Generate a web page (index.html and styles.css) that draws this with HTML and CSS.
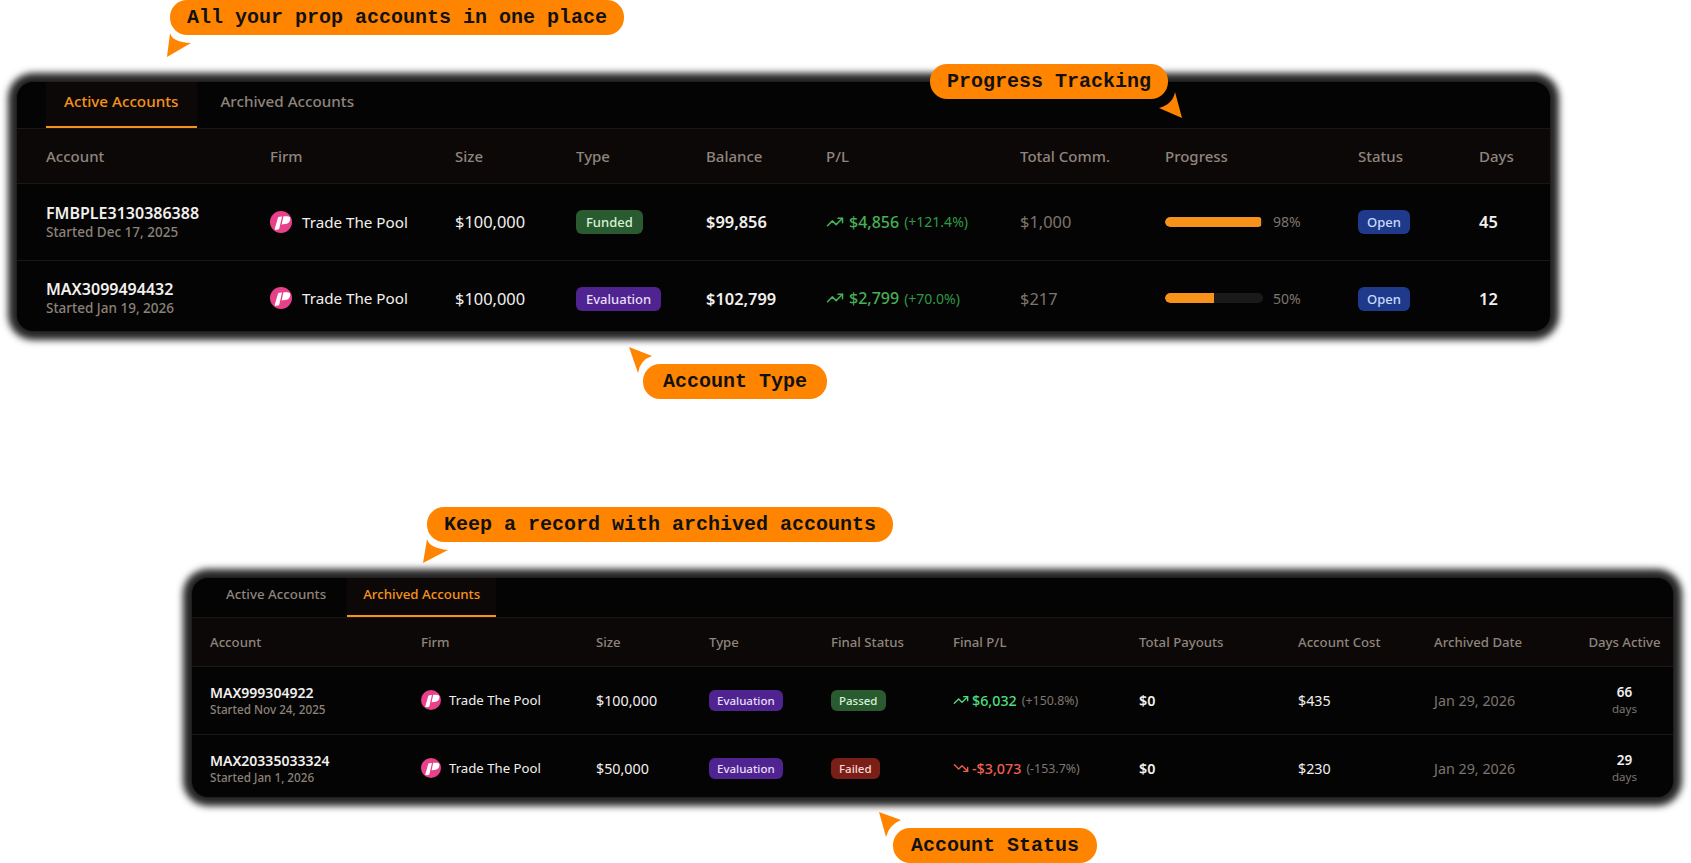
FILE: index.html
```html
<!DOCTYPE html>
<html lang="en">
<head>
  <meta charset="UTF-8" />
  <title>Prop Accounts</title>
  <link rel="stylesheet" href="styles.css">
</head>
<body>
<svg class="defs" width="0" height="0">
  <symbol id="firm-logo" viewBox="0 0 64 64">
    <circle cx="32" cy="32" r="32" fill="#e8408a"/>
    <path d="M14 51 L23 20 Q24 17 27 17 L35 16 L27 51 Q26 54 23 54 L16 55 Q13 55 14 51Z" fill="#fff"/>
    <path d="M39 15 L50 15 Q60 15 59 24 Q57 38 43 38 L34 39Z" fill="#fff"/>
  </symbol>
  <symbol id="trend-up" viewBox="0 0 24 24">
    <polyline points="22 7 13.5 15.5 8.5 10.5 2 17"/>
    <polyline points="16 7 22 7 22 13"/>
  </symbol>
  <symbol id="trend-down" viewBox="0 0 24 24">
    <polyline points="22 17 13.5 8.5 8.5 13.5 2 7"/>
    <polyline points="16 17 22 17 22 11"/>
  </symbol>
</svg>

<div class="card card-active">
  <div class="tabs">
    <a class="tab current" href="#">Active Accounts</a>
    <a class="tab" href="#">Archived Accounts</a>
  </div>
  <table>
    <colgroup>
      <col style="width:224px"><col style="width:185px"><col style="width:121px"><col style="width:130px"><col style="width:120px">
      <col style="width:194px"><col style="width:145px"><col style="width:193px"><col style="width:121px"><col style="width:100px">
    </colgroup>
    <thead>
      <tr><th>Account</th><th>Firm</th><th>Size</th><th>Type</th><th>Balance</th><th>P/L</th><th>Total Comm.</th><th>Progress</th><th>Status</th><th>Days</th></tr>
    </thead>
    <tbody>
      <tr>
        <td><div class="acct">FMBPLE3130386388</div><div class="started">Started Dec 17, 2025</div></td>
        <td><div class="firm"><svg class="logo"><use href="#firm-logo"/></svg>Trade The Pool</div></td>
        <td>$100,000</td>
        <td><span class="badge funded">Funded</span></td>
        <td class="strong">$99,856</td>
        <td><div class="pl gain"><svg class="trend"><use href="#trend-up"/></svg><span class="amount">$4,856</span><span class="pct">(+121.4%)</span></div></td>
        <td class="muted">$1,000</td>
        <td><div class="progress"><div class="track"><div class="fill" style="width:98%"></div></div><span class="pct-label">98%</span></div></td>
        <td><span class="badge open">Open</span></td>
        <td class="strong">45</td>
      </tr>
      <tr class="last">
        <td><div class="acct">MAX3099494432</div><div class="started">Started Jan 19, 2026</div></td>
        <td><div class="firm"><svg class="logo"><use href="#firm-logo"/></svg>Trade The Pool</div></td>
        <td>$100,000</td>
        <td><span class="badge evaluation">Evaluation</span></td>
        <td class="strong">$102,799</td>
        <td><div class="pl gain"><svg class="trend"><use href="#trend-up"/></svg><span class="amount">$2,799</span><span class="pct">(+70.0%)</span></div></td>
        <td class="muted">$217</td>
        <td><div class="progress"><div class="track"><div class="fill" style="width:50%"></div></div><span class="pct-label">50%</span></div></td>
        <td><span class="badge open">Open</span></td>
        <td class="strong">12</td>
      </tr>
    </tbody>
  </table>
</div>

<div class="card card-archived">
  <div class="tabs">
    <a class="tab" href="#">Active Accounts</a>
    <a class="tab current" href="#">Archived Accounts</a>
  </div>
  <table>
    <colgroup>
      <col style="width:211px"><col style="width:175px"><col style="width:113px"><col style="width:122px"><col style="width:122px">
      <col style="width:186px"><col style="width:159px"><col style="width:136px"><col style="width:154px"><col style="width:103px">
    </colgroup>
    <thead>
      <tr><th>Account</th><th>Firm</th><th>Size</th><th>Type</th><th>Final Status</th><th>Final P/L</th><th>Total Payouts</th><th>Account Cost</th><th>Archived Date</th><th class="days-col">Days Active</th></tr>
    </thead>
    <tbody>
      <tr>
        <td><div class="acct">MAX999304922</div><div class="started">Started Nov 24, 2025</div></td>
        <td><div class="firm"><svg class="logo"><use href="#firm-logo"/></svg>Trade The Pool</div></td>
        <td>$100,000</td>
        <td><span class="badge evaluation">Evaluation</span></td>
        <td><span class="badge funded">Passed</span></td>
        <td><div class="pl gain"><svg class="trend"><use href="#trend-up"/></svg><span class="amount">$6,032</span><span class="pct">(+150.8%)</span></div></td>
        <td class="strong">$0</td>
        <td>$435</td>
        <td class="muted">Jan 29, 2026</td>
        <td class="days-col"><div class="days-num">66</div><div class="days-unit">days</div></td>
      </tr>
      <tr class="last">
        <td><div class="acct">MAX20335033324</div><div class="started">Started Jan 1, 2026</div></td>
        <td><div class="firm"><svg class="logo"><use href="#firm-logo"/></svg>Trade The Pool</div></td>
        <td>$50,000</td>
        <td><span class="badge evaluation">Evaluation</span></td>
        <td><span class="badge failed">Failed</span></td>
        <td><div class="pl loss"><svg class="trend"><use href="#trend-down"/></svg><span class="amount">-$3,073</span><span class="pct">(-153.7%)</span></div></td>
        <td class="strong">$0</td>
        <td>$230</td>
        <td class="muted">Jan 29, 2026</td>
        <td class="days-col"><div class="days-num">29</div><div class="days-unit">days</div></td>
      </tr>
    </tbody>
  </table>
</div>

<div class="callout c-all">All your prop accounts in one place</div>
<div class="callout c-progress">Progress Tracking</div>
<div class="callout c-type">Account Type</div>
<div class="callout c-record">Keep a record with archived accounts</div>
<div class="callout c-status">Account Status</div>

<svg class="pointers" width="1691" height="863">
  <path d="M170 33 Q172 42 191 43 L167 57Z"/>
  <path d="M1175 92 Q1173 104 1159 108 L1182 118Z"/>
  <path d="M629 347 L652 356 Q640 360 638 373Z"/>
  <path d="M427 539 Q429 548 448 550 L423 563Z"/>
  <path d="M879 812 L901 820 Q889 825 886 837Z"/>
</svg>
</body>
</html>
```

FILE: styles.css
```css
* {
  box-sizing: border-box;
}
body {
  margin: 0;
  height: 100vh;
  overflow: hidden;
  position: relative;
  background: #fff;
  font-family: 'Noto Sans', sans-serif;
  color: #fff;
}
.defs {
  position: absolute;
}
.card {
  background: #050404;
  border-radius: 16px;
  overflow: hidden;
  box-shadow: 0 0 0 1px #1f1f1f, 0 0 7px 9px #262626;
}
.card-active {
  width: 1533px;
  margin: 82px 0 0 17px;
}
.card-archived {
  width: 1481px;
  margin: 247px 0 0 192px;
}

/* tabs */
.tabs {
  display: flex;
  border-bottom: 1px solid #1a1716;
}
.tab {
  color: #8f857c;
  text-decoration: none;
  font-weight: 500;
  display: flex;
  align-items: center;
  border-bottom: 2px solid transparent;
}
.tab.current {
  color: #f7931a;
  background: #0c0808;
  border-bottom-color: #f7931a;
}
.card-active .tabs {
  height: 47px;
  padding-left: 29px;
  gap: 5px;
}
.card-active .tab {
  padding: 0 19px 7px 18px;
  font-size: 15.2px;
}
.card-archived .tabs {
  height: 40px;
  padding-left: 18px;
  gap: 5px;
}
.card-archived .tab {
  padding: 0 16px 5px;
  font-size: 13.3px;
}

/* table */
table {
  width: 100%;
  table-layout: fixed;
  border-collapse: collapse;
}
th {
  text-align: left;
  font-weight: 500;
  color: #8f857c;
  background: #0c0808;
  border-bottom: 1px solid #1a1716;
}
td {
  vertical-align: middle;
  border-bottom: 1px solid #1a1716;
  color: #f2f0ee;
}
tr.last td {
  border-bottom: none;
}
.card-active th,
.card-active td {
  padding-left: 29px;
}
.card-active th {
  height: 54px;
  font-size: 15px;
}
.card-active td {
  height: 77px;
  font-size: 16.4px;
}
.card-active tr.last td {
  height: 71px;
  padding-top: 6px;
}
.card-archived th,
.card-archived td {
  padding-left: 18px;
}
.card-archived th {
  height: 48px;
  font-size: 13.2px;
}
.card-archived td {
  height: 68px;
  font-size: 14.3px;
  padding-top: 1px;
}
.card-archived tr.last td {
  height: 63px;
  padding-top: 6px;
}
.strong {
  font-weight: 600;
}
td.muted {
  color: #7d756e;
}

.acct {
  font-weight: 600;
}
.started {
  color: #8b8279;
  font-weight: 500;
}
.card-active .acct {
  font-size: 16px;
  line-height: 20px;
}
.card-active .started {
  font-size: 13.5px;
  line-height: 18px;
}
.card-archived .acct {
  font-size: 14px;
  line-height: 18px;
}
.card-archived .started {
  font-size: 11.7px;
  line-height: 15px;
}

.firm {
  display: flex;
  align-items: center;
}
.logo {
  flex: none;
}
.card-active .firm {
  font-size: 15.2px;
}
.card-archived .firm {
  font-size: 13.2px;
}
.card-active .logo {
  width: 22px;
  height: 22px;
  margin-right: 10px;
}
.card-archived .logo {
  width: 20px;
  height: 20px;
  margin-right: 8px;
}

.badge {
  display: inline-block;
  font-weight: 500;
}
.card-active .badge {
  font-size: 13px;
  line-height: 24px;
  padding: 0 10px;
  border-radius: 6px;
}
.card-active .open {
  padding: 0 9px;
}
.card-archived .badge {
  font-size: 11.5px;
  line-height: 21px;
  padding: 0 8px;
  border-radius: 6px;
}
.funded {
  background: #2a5a2f;
  color: #d6f2d6;
}
.evaluation {
  background: #4f2390;
  color: #e9def9;
}
.open {
  background: #1f3a8a;
  color: #c9daff;
}
.failed {
  background: #7a1f18;
  color: #fbd9d4;
}

.pl {
  display: flex;
  align-items: center;
}
.trend {
  fill: none;
  stroke: currentColor;
  stroke-width: 2;
  stroke-linecap: round;
  stroke-linejoin: round;
  flex: none;
}
.card-active .trend {
  width: 18px;
  height: 18px;
  margin-right: 5px;
}
.card-archived .trend {
  width: 16px;
  height: 16px;
  margin-right: 3px;
}
.pl .amount {
  font-weight: 500;
}
.pl .pct {
  margin-left: 5px;
}
.card-active .pct {
  font-size: 14px;
}
.card-archived .pct {
  font-size: 12.4px;
  color: #7d756e;
}
.card-active .pl .amount {
  font-size: 16px;
}
.card-active .gain {
  color: #45b056;
}
.card-active .gain .pct {
  color: #2f9a46;
}
.card-archived .gain {
  color: #4ade80;
}
.card-archived .loss {
  color: #ef5f52;
}

.progress {
  display: flex;
  align-items: center;
  gap: 10px;
}
.track {
  width: 98px;
  height: 10px;
  border-radius: 5px;
  background: #1a1a1a;
  overflow: hidden;
}
.fill {
  height: 100%;
  background: #f7931a;
  border-radius: 5px 0 0 5px;
}
.pct-label {
  font-size: 14px;
  color: #7d756e;
}

.days-col {
  text-align: center;
  padding-right: 12px;
}
.days-num {
  font-weight: 600;
  font-size: 13.5px;
  line-height: 18px;
}
.days-unit {
  font-size: 11.5px;
  line-height: 16px;
  color: #7d756e;
}

/* callouts sit on top of the cards */
.callout {
  position: absolute;
  height: 35px;
  padding: 0 17px;
  border-radius: 17px;
  background: #ff8500;
  color: #111;
  font-family: 'Liberation Mono', monospace;
  font-weight: 700;
  font-size: 20px;
  line-height: 35px;
  white-space: nowrap;
}
.c-all {
  left: 170px;
  top: 0;
}
.c-progress {
  left: 930px;
  top: 64px;
}
.c-type {
  left: 643px;
  top: 364px;
  padding: 0 20px;
}
.c-record {
  left: 427px;
  top: 507px;
}
.c-status {
  left: 893px;
  top: 828px;
  padding: 0 18px;
}
.pointers {
  position: absolute;
  left: 0;
  top: 0;
  fill: #ff8500;
  pointer-events: none;
}
```
